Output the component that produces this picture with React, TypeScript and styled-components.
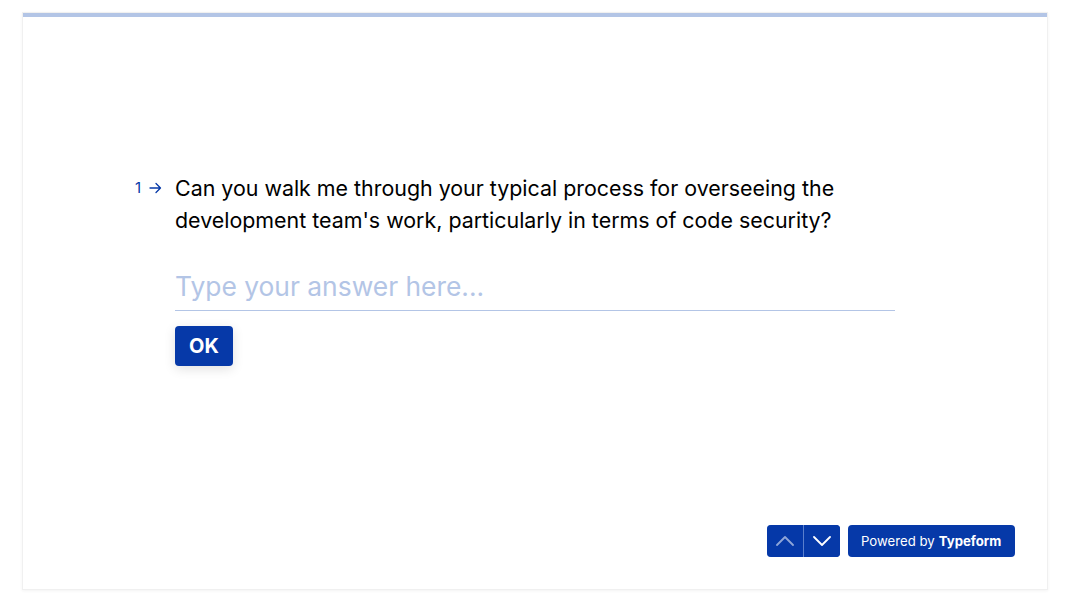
import React from "react";
import styled, { createGlobalStyle } from "styled-components";

const BLUE = "#0639a8";
const LIGHT = "#b3c5e6";

const Global = createGlobalStyle`
  html, body { margin: 0; padding: 0; background: #ffffff; }
  body { font-family: Inter, "Noto Sans", sans-serif; -webkit-font-smoothing: antialiased; }
  * { box-sizing: border-box; }
`;

const Page = styled.div`
  padding: 12px 26px 21px 22px;
  height: 611px;
`;

const Frame = styled.div`
  height: 578px;
  border: 1px solid #f0f0f0;
  box-shadow: 0 1px 3px rgba(0, 0, 0, 0.05);
  display: flex;
  flex-direction: column;
  background: #fff;
`;

const Progress = styled.div`
  height: 4px;
  background: ${LIGHT};
  flex-shrink: 0;
`;

const Body = styled.div`
  flex: 1;
  display: flex;
  justify-content: center;
  padding-top: 155px;
`;

const Block = styled.div`
  width: 720px;
  display: flex;
  flex-direction: column;
`;

const QuestionRow = styled.div`
  display: flex;
  align-items: flex-start;
  margin-left: -40px;
`;

const Number = styled.div`
  width: 40px;
  display: flex;
  align-items: center;
  gap: 8px;
  color: ${BLUE};
  font-size: 15px;
  line-height: 32px;
`;

const Question = styled.h1`
  margin: 0;
  font-size: 21.4px;
  line-height: 32px;
  font-weight: 400;
  color: #000;
  flex: 1;
`;

const Input = styled.input`
  margin-top: 33px;
  width: 100%;
  border: none;
  border-bottom: 1px solid ${LIGHT};
  outline: none;
  padding: 1px 0 8px;
  font-family: inherit;
  font-size: 26.4px;
  line-height: 32px;
  color: ${BLUE};
  background: transparent;
  &::placeholder { color: ${LIGHT}; }
`;

const OkButton = styled.button`
  margin-top: 15px;
  align-self: flex-start;
  width: 58px;
  height: 40px;
  border: none;
  border-radius: 4px;
  background: ${BLUE};
  color: #fff;
  font-family: inherit;
  font-weight: 700;
  font-size: 20px;
  box-shadow: 0 3px 12px rgba(0, 0, 0, 0.12);
  cursor: pointer;
`;

const Footer = styled.div`
  display: flex;
  justify-content: flex-end;
  gap: 8px;
  padding: 0 32px 32px;
`;

const NavGroup = styled.div`
  display: flex;
  height: 32px;
  border-radius: 4px;
  overflow: hidden;
  background: ${BLUE};
`;

const NavButton = styled.button<{ $disabled?: boolean }>`
  width: 36px;
  height: 32px;
  border: none;
  background: ${BLUE};
  display: flex;
  align-items: center;
  justify-content: center;
  padding: 0;
  opacity: ${(p) => (p.$disabled ? 0.55 : 1)};
`;

const Divider = styled.div`
  width: 1px;
  background: #5a7fcc;
`;

const Powered = styled.a`
  height: 32px;
  display: flex;
  align-items: center;
  padding: 0 13px;
  width: 167px;
  border-radius: 4px;
  background: ${BLUE};
  color: #fff;
  font-size: 13.2px;
  text-decoration: none;
  white-space: nowrap;
  b { font-weight: 700; margin-left: 4px; }
`;

const Arrow = () => (
  <svg width="13" height="12" viewBox="0 0 13 12" fill="none">
    <path d="M1 6h10.5M7 1.5l4.5 4.5L7 10.5" stroke={BLUE} strokeWidth="1.3" strokeLinecap="round" strokeLinejoin="round" />
  </svg>
);

const Chevron = ({ up }: { up?: boolean }) => (
  <svg width="18" height="10" viewBox="0 0 18 10" fill="none">
    <path
      d={up ? "M1 9l8-8 8 8" : "M1 1l8 8 8-8"}
      stroke="#fff"
      strokeWidth="1.8"
      strokeLinecap="round"
      strokeLinejoin="round"
    />
  </svg>
);

export default function App() {
  return (
    <Page>
      <Global />
      <Frame>
        <Progress />
        <Body>
          <Block>
            <QuestionRow>
              <Number>
                1<Arrow />
              </Number>
              <Question>
                Can you walk me through your typical process for overseeing the development team's work,
                particularly in terms of code security?
              </Question>
            </QuestionRow>
            <Input placeholder="Type your answer here..." />
            <OkButton>OK</OkButton>
          </Block>
        </Body>
        <Footer>
          <NavGroup>
            <NavButton $disabled aria-label="previous">
              <Chevron up />
            </NavButton>
            <Divider />
            <NavButton aria-label="next">
              <Chevron />
            </NavButton>
          </NavGroup>
          <Powered href="#">
            Powered by <b>Typeform</b>
          </Powered>
        </Footer>
      </Frame>
    </Page>
  );
}
